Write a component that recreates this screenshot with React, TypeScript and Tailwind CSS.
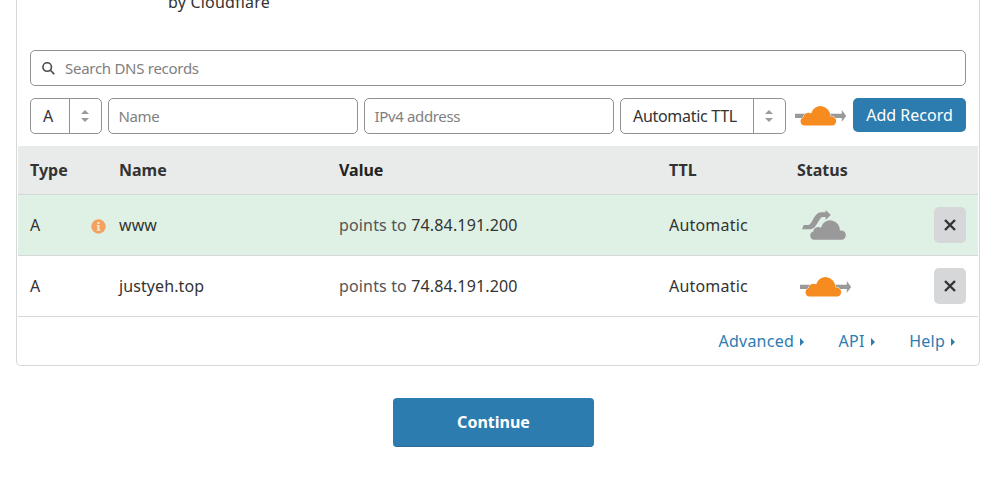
import type { ReactNode } from "react";

const CLOUD =
  "M4.5 19.3A4.3 4.3 0 0 1 3.6 10.9A4.9 4.9 0 0 1 11.1 7.2A9.7 9.7 0 0 1 30.2 10.1A4.75 4.75 0 1 1 32.6 19.3Z";

function ProxiedCloud() {
  return (
    <svg className="block" width="52" height="21" viewBox="0 0 52 21">
      <path d="M0 7.7h46.8V4L51.2 9.9l-4.4 5.9V12H0z" fill="#999" />
      <g transform="translate(5 0.3)">
        <path d={CLOUD} fill="#f68b1f" stroke="#fff" strokeWidth="1" paintOrder="stroke" />
      </g>
    </svg>
  );
}

function BypassedCloud() {
  return (
    <svg className="block" width="46" height="31" viewBox="0 0 46 31">
      <path
        d="M0 19.3L1.6 15H6.2C10.5 14.6 12 2.2 19 2.2H23.6V0L28.8 4.9L23.6 10V7H20.5C17 7 14.5 19.3 8.2 19.3Z"
        fill="#999"
      />
      <g transform="translate(7.7 10.5)">
        <path d={CLOUD} fill="#999" stroke="#dff1e5" strokeWidth="1" paintOrder="stroke" />
      </g>
    </svg>
  );
}

function Select({ className, children }: { className: string; children: ReactNode }) {
  return (
    <div className={`flex h-9 rounded-[5px] border border-[#8e9396] text-base tracking-[-0.3px] text-[#333] ${className}`}>
      <div className="flex flex-1 items-center pl-3 whitespace-nowrap">{children}</div>
      <div className="flex w-8 items-center justify-center border-l border-[#8e9396] pr-0.5">
        <svg width="8" height="12" viewBox="0 0 8 12" fill="#979b9d">
          <path d="M4 0l4 4H0zM4 12l4-4H0z" />
        </svg>
      </div>
    </div>
  );
}

function Field({ children }: { children: ReactNode }) {
  return (
    <div className="ml-1.5 flex h-9 w-[250px] items-center rounded-[5px] border border-[#8e9396] pl-[9.5px] text-[15px] tracking-[-0.35px] text-[#808080]">
      {children}
    </div>
  );
}

function RemoveButton() {
  return (
    <button className="flex h-9 w-8 items-center justify-center rounded-[5px] bg-[#d5d7d8] pr-px">
      <svg width="12" height="12" viewBox="0 0 12 12" stroke="#333" strokeWidth="2.4">
        <path d="M1 1l10 10M11 1L1 11" />
      </svg>
    </button>
  );
}

const COLS = "grid grid-cols-[61px_28px_220px_330px_128px_137px_32px] items-center border-b border-[#d5d7d8] pl-3";

function Row({ name, active }: { name: string; active: boolean }) {
  return (
    <div className={`${COLS} h-[61px] ${active ? "bg-[#dff1e5]" : ""}`}>
      <span>A</span>
      <span>
        {active && (
          <svg className="mt-0.5 block" width="15" height="15" viewBox="0 0 15 15">
            <circle cx="7.5" cy="7.5" r="7.2" fill="#f4a15d" />
            <path d="M6.5 3h2v2h-2zM5.7 6h2.8v4.5h.9v1.2H5.7v-1.2h.8V7.2h-.8z" fill="#f1e6d5" />
          </svg>
        )}
      </span>
      <span className="tracking-[0.1px]">{name}</span>
      <span className="tracking-[0.15px]">
        <span className="text-[#555]">points to</span> 74.84.191.200
      </span>
      <span className="tracking-[0.2px]">Automatic</span>
      <span className={active ? "pl-[5px]" : "pl-[3px] pt-0.5"}>
        {active ? <BypassedCloud /> : <ProxiedCloud />}
      </span>
      <RemoveButton />
    </div>
  );
}

function FooterLink({ children }: { children: ReactNode }) {
  return (
    <a className="flex items-center gap-1.5 tracking-[0.25px]">
      {children}
      <svg className="mt-0.5" width="4" height="8" viewBox="0 0 4 8" fill="#2c7cb0">
        <path d="M0 0l4 4-4 4z" />
      </svg>
    </a>
  );
}

export default function App() {
  return (
    <div className="h-[480px] w-[1006px] overflow-hidden bg-white px-4 font-['Noto_Sans',sans-serif] text-base text-[#333]">
      <div className="h-[366px] w-[964px] rounded-b-[5px] border border-t-0 border-[#d5d7d8] px-px">
        <div className="flex h-[50px] items-start pl-[150px]">
          <p className="-mt-2.5 leading-6 tracking-[0.2px]">by Cloudflare</p>
        </div>
        <div className="mx-3 flex h-9 items-center rounded-[5px] border border-[#8e9396] pl-[11px] text-[15px] tracking-[-0.28px] text-[#808080]">
          <svg width="13" height="13" viewBox="0 0 14 14" fill="none" stroke="#4d4d4d" strokeWidth="1.8">
            <circle cx="5.6" cy="5.4" r="4.6" />
            <path d="M8.8 8.6l4.4 4.4" />
          </svg>
          <span className="ml-2.5">Search DNS records</span>
        </div>
        <div className="mx-3 mt-3 flex h-12">
          <Select className="w-[72px]">A</Select>
          <Field>Name</Field>
          <Field>IPv4 address</Field>
          <Select className="ml-1.5 w-[166px]">Automatic TTL</Select>
          <div className="mt-2 ml-[9px] w-[58px]">
            <ProxiedCloud />
          </div>
          <button className="h-[34px] w-[113px] rounded-[5px] bg-[#2c7cb0] whitespace-nowrap text-white">
            Add Record
          </button>
        </div>
        <div className={`${COLS} h-[49px] bg-[#e9ebea] font-bold`}>
          <span>Type</span>
          <span />
          <span>Name</span>
          <span className="text-[#222]">Value</span>
          <span>TTL</span>
          <span>Status</span>
          <span />
        </div>
        <Row name="www" active />
        <Row name="justyeh.top" active={false} />
        <div className="flex h-12 items-center justify-end gap-[34.5px] pr-[23px] text-[#2c7cb0]">
          <FooterLink>Advanced</FooterLink>
          <FooterLink>API</FooterLink>
          <FooterLink>Help</FooterLink>
        </div>
      </div>
      <button className="mt-8 ml-[377px] block h-[49px] w-[201px] rounded-[4px] border-b border-[#2a6d9b] bg-[#2c7cb0] font-bold text-white">
        Continue
      </button>
    </div>
  );
}
